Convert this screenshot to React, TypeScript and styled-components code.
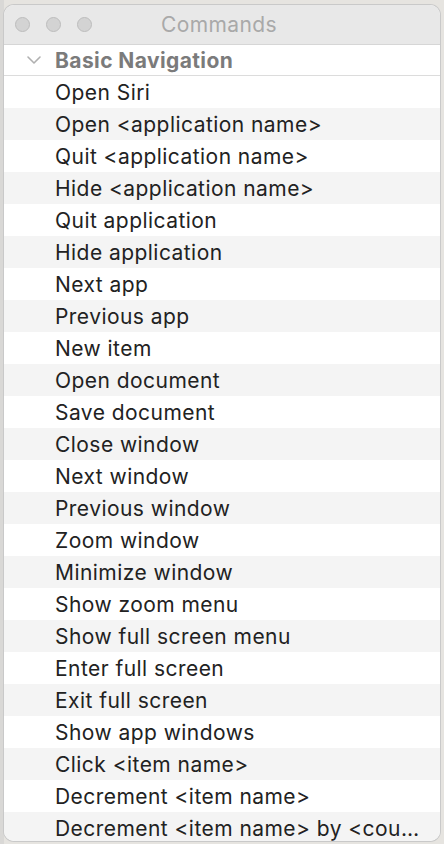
import React from 'react';
import styled, { createGlobalStyle } from 'styled-components';

const commands = [
  'Open Siri',
  'Open <application name>',
  'Quit <application name>',
  'Hide <application name>',
  'Quit application',
  'Hide application',
  'Next app',
  'Previous app',
  'New item',
  'Open document',
  'Save document',
  'Close window',
  'Next window',
  'Previous window',
  'Zoom window',
  'Minimize window',
  'Show zoom menu',
  'Show full screen menu',
  'Enter full screen',
  'Exit full screen',
  'Show app windows',
  'Click <item name>',
  'Decrement <item name>',
  'Decrement <item name> by <count>',
];

const GlobalStyle = createGlobalStyle`
  html, body {
    margin: 0;
    padding: 0;
    height: 844px;
    overflow: hidden;
    background: #e6e4e0;
  }
  body {
    font-family: Inter, 'Liberation Sans', Arial, sans-serif;
  }
`;

const Desktop = styled.div`
  height: 844px;
  padding: 5px 4px 3px 4px;
  box-sizing: border-box;
  background: linear-gradient(to right, #d9d8d6 0 4px, #e6e4e0 4px);
`;

const Window = styled.div`
  height: 100%;
  display: flex;
  flex-direction: column;
  background: #ffffff;
  border-radius: 10px;
  box-shadow: 0 0 0 1px #c9c9c9;
  overflow: hidden;
`;

const TitleBar = styled.div`
  height: 39px;
  flex: none;
  display: flex;
  align-items: center;
  background: #e8e8e8;
  border-bottom: 1px solid #d6d6d6;
`;

const Lights = styled.div`
  display: flex;
  gap: 16px;
  padding-left: 11px;
`;

const Light = styled.span`
  width: 13px;
  height: 13px;
  border-radius: 50%;
  background: #d3d3d3;
  border: 1px solid #bdbdbd;
`;

const Title = styled.div`
  flex: 1;
  text-align: center;
  margin-right: 94px;
  font-size: 21px;
  letter-spacing: 0.4px;
  color: #a9a9a9;
`;

const GroupHeader = styled.div`
  height: 30px;
  flex: none;
  display: flex;
  align-items: center;
  padding-left: 22px;
  gap: 13px;
  border-bottom: 1px solid #dcdcdc;
  color: #7b7b7b;
  font-size: 21px;
  font-weight: 700;
  letter-spacing: 0.4px;
`;

const List = styled.div`
  flex: 1;
  display: flex;
  flex-direction: column;
`;

const Row = styled.div<{ $alt: boolean }>`
  height: 32px;
  flex: none;
  display: flex;
  align-items: center;
  padding: 0 16px 0 51px;
  background: ${({ $alt }) => ($alt ? '#f4f4f4' : '#ffffff')};
  color: #222222;
  font-size: 21px;
  letter-spacing: 0.45px;
  white-space: nowrap;
  overflow: hidden;
`;

const Label = styled.span`
  overflow: hidden;
  text-overflow: ellipsis;
`;

const Chevron = () => (
  <svg width="16" height="10" viewBox="0 0 16 10" fill="none">
    <path d="M2 2l6 6 6-6" stroke="#b0b0b0" strokeWidth="1.6" strokeLinecap="round" strokeLinejoin="round" />
  </svg>
);

const App = () => {
  return (
    <>
      <GlobalStyle />
      <Desktop>
        <Window>
          <TitleBar>
            <Lights>
              <Light />
              <Light />
              <Light />
            </Lights>
            <Title>Commands</Title>
          </TitleBar>
          <GroupHeader>
            <Chevron />
            Basic Navigation
          </GroupHeader>
          <List>
            {commands.map((c, i) => (
              <Row key={c} $alt={i % 2 === 1}>
                <Label>{c}</Label>
              </Row>
            ))}
          </List>
        </Window>
      </Desktop>
    </>
  );
};

export default App;
